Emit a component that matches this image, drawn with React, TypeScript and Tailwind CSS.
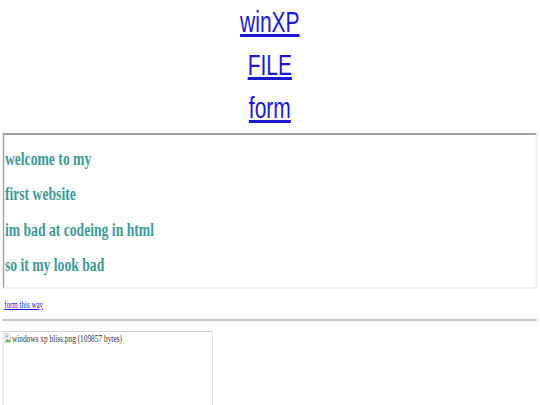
import React from 'react';

const links = ['winXP', 'FILE', 'form'];

const lines = [
  'welcome to my',
  'first website',
  'im bad at codeing in html',
  'so it my look bad',
];

const BrokenImage = () => (
  <svg width="10" height="10" viewBox="0 0 16 16" className="inline-block align-[-1px] mr-[1px]">
    <path d="M2 1h8l4 4v10H2z" fill="#f4f4f4" stroke="#9a9a9a" />
    <path d="M3 14l4-5 3 3 2-2 2 4z" fill="#4caf50" />
    <circle cx="6" cy="5" r="1.6" fill="#3b82f6" />
  </svg>
);

const App = () => {
  return (
    <div className="w-[540px] h-[405px] overflow-hidden bg-white">
      <div className="w-[771px] origin-top-left scale-x-[0.7]">
        {/* top links */}
        <div className="font-['Liberation_Sans',Arial,sans-serif] text-[30px] leading-[43px]">
          {links.map((l) => (
            <div key={l} className="text-center h-[43px]">
              <a href="#" className="underline text-[#1a1acf]">
                {l}
              </a>
            </div>
          ))}
        </div>

        {/* welcome box */}
        <div className="mt-[4px] mx-[4px] border-2 border-t-[#a0a0a0] border-l-[#a0a0a0] border-r-[#efefef] border-b-[#efefef] pt-[6px] pb-[5px] pl-[1px]">
          {lines.map((t) => (
            <div
              key={t}
              className="font-['Liberation_Serif','Times_New_Roman',serif] font-bold text-[19.5px] leading-[35.3px] text-[#3d9997]"
            >
              {t}
            </div>
          ))}
        </div>

        <div className="mt-[10px] ml-[6px] font-['Liberation_Serif','Times_New_Roman',serif] text-[10px] leading-[12px]">
          <a href="#" className="underline text-[#1a1acf]">
            form this way
          </a>
        </div>

        <div className="mt-[8px] mx-[4px] h-[2px] bg-[#c9c9c9]" />

        <div className="mt-[10px] ml-[4px] w-[300px] h-[120px] border border-[#d4d4d4] px-[1px] pt-[1px] font-['Liberation_Serif','Times_New_Roman',serif] text-[10.5px] leading-[12px] text-[#333]">
          <BrokenImage />
          windows xp bliss.png (109857 bytes)
        </div>
      </div>
    </div>
  );
};

export default App;
